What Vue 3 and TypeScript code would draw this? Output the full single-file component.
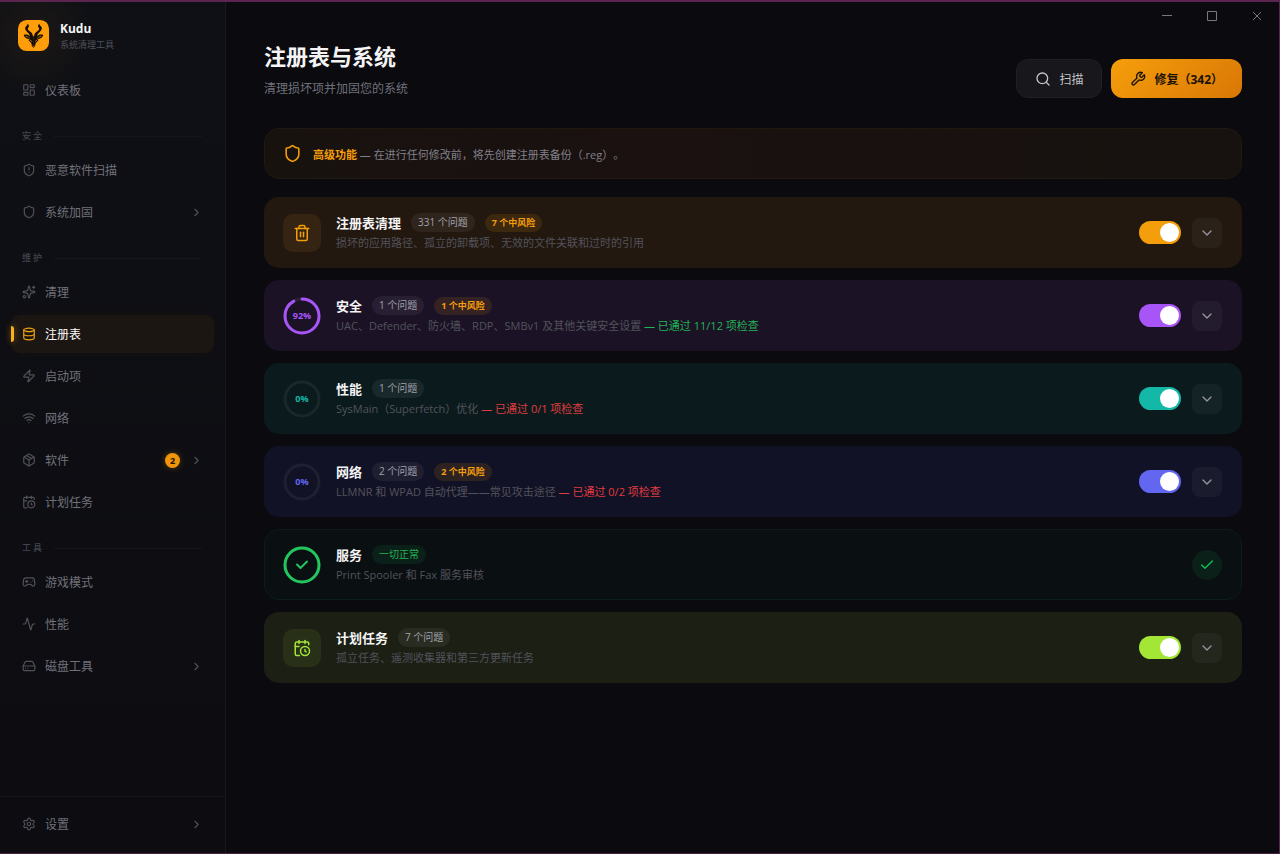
<script setup lang="ts">
import { reactive } from 'vue'

type IconName = keyof typeof icons

interface NavItem {
  label: string
  icon: IconName
  active?: boolean
  expandable?: boolean
  badge?: number
}

interface NavGroup {
  title?: string
  items: NavItem[]
}

interface Category {
  id: string
  title: string
  icon?: IconName
  percent?: number
  issues?: string
  risk?: string
  description: string
  checks?: string
  checksOk?: boolean
  healthy?: boolean
  enabled: boolean
}

const icons = {
  dashboard: [
    'M4 3h5a1 1 0 0 1 1 1v7a1 1 0 0 1-1 1H4a1 1 0 0 1-1-1V4a1 1 0 0 1 1-1z',
    'M15 3h5a1 1 0 0 1 1 1v3a1 1 0 0 1-1 1h-5a1 1 0 0 1-1-1V4a1 1 0 0 1 1-1z',
    'M15 12h5a1 1 0 0 1 1 1v7a1 1 0 0 1-1 1h-5a1 1 0 0 1-1-1v-7a1 1 0 0 1 1-1z',
    'M4 16h5a1 1 0 0 1 1 1v3a1 1 0 0 1-1 1H4a1 1 0 0 1-1-1v-3a1 1 0 0 1 1-1z',
  ],
  shield: [
    'M20 13c0 5-3.5 7.5-7.66 8.95a1 1 0 0 1-.67-.01C7.5 20.5 4 18 4 13V6a1 1 0 0 1 1-1c2 0 4.5-1.2 6.24-2.72a1.17 1.17 0 0 1 1.52 0C14.51 3.81 17 5 19 5a1 1 0 0 1 1 1z',
  ],
  shieldAlert: [
    'M20 13c0 5-3.5 7.5-7.66 8.95a1 1 0 0 1-.67-.01C7.5 20.5 4 18 4 13V6a1 1 0 0 1 1-1c2 0 4.5-1.2 6.24-2.72a1.17 1.17 0 0 1 1.52 0C14.51 3.81 17 5 19 5a1 1 0 0 1 1 1z',
    'M12 8v4',
    'M12 16h.01',
  ],
  sparkles: [
    'M11.017 2.814a1 1 0 0 1 1.966 0l1.051 5.558a2 2 0 0 0 1.594 1.594l5.558 1.051a1 1 0 0 1 0 1.966l-5.558 1.051a2 2 0 0 0-1.594 1.594l-1.051 5.558a1 1 0 0 1-1.966 0l-1.051-5.558a2 2 0 0 0-1.594-1.594l-5.558-1.051a1 1 0 0 1 0-1.966l5.558-1.051a2 2 0 0 0 1.594-1.594z',
    'M20 2v4',
    'M22 4h-4',
    'M6 20a2 2 0 1 1-4 0a2 2 0 1 1 4 0',
  ],
  database: [
    'M21 5a9 3 0 1 1-18 0a9 3 0 1 1 18 0',
    'M3 5v14a9 3 0 0 0 18 0V5',
    'M3 12a9 3 0 0 0 18 0',
  ],
  zap: [
    'M4 14a1 1 0 0 1-.78-1.63l9.9-10.2a.5.5 0 0 1 .86.46l-1.92 6.02A1 1 0 0 0 13 10h7a1 1 0 0 1 .78 1.63l-9.9 10.2a.5.5 0 0 1-.86-.46l1.92-6.02A1 1 0 0 0 11 14z',
  ],
  wifi: ['M12 20h.01', 'M2 8.82a15 15 0 0 1 20 0', 'M5 12.859a10 10 0 0 1 14 0', 'M8.5 16.429a5 5 0 0 1 7 0'],
  package: [
    'M11 21.73a2 2 0 0 0 2 0l7-4A2 2 0 0 0 21 16V8a2 2 0 0 0-1-1.73l-7-4a2 2 0 0 0-2 0l-7 4A2 2 0 0 0 3 8v8a2 2 0 0 0 1 1.73z',
    'M12 22V12',
    'M3.29 7L12 12l8.71-5',
    'M7.5 4.27l9 5.15',
  ],
  calendarClock: [
    'M16 14v2.2l1.6 1',
    'M16 2v4',
    'M21 7.5V6a2 2 0 0 0-2-2H5a2 2 0 0 0-2 2v14a2 2 0 0 0 2 2h3.5',
    'M3 10h5',
    'M8 2v4',
    'M22 16a6 6 0 1 1-12 0a6 6 0 1 1 12 0',
  ],
  gamepad: [
    'M6 11h4',
    'M8 9v4',
    'M15 12h.01',
    'M18 10h.01',
    'M17.32 5H6.68a4 4 0 0 0-3.978 3.59c-.006.052-.01.101-.017.152C2.604 9.416 2 14.456 2 16a3 3 0 0 0 3 3c1 0 1.5-.5 2-1l1.414-1.414A2 2 0 0 1 9.828 16h4.344a2 2 0 0 1 1.414.586L17 18c.5.5 1 1 2 1a3 3 0 0 0 3-3c0-1.545-.604-6.584-.685-7.258-.007-.05-.011-.1-.017-.151A4 4 0 0 0 17.32 5z',
  ],
  activity: [
    'M22 12h-2.48a2 2 0 0 0-1.93 1.46l-2.35 8.36a.25.25 0 0 1-.48 0L9.24 2.18a.25.25 0 0 0-.48 0l-2.35 8.36A2 2 0 0 1 4.49 12H2',
  ],
  hardDrive: [
    'M22 12H2',
    'M5.45 5.11L2 12v6a2 2 0 0 0 2 2h16a2 2 0 0 0 2-2v-6l-3.45-6.89A2 2 0 0 0 16.76 4H7.24a2 2 0 0 0-1.79 1.11z',
    'M6 16h.01',
    'M10 16h.01',
  ],
  settings: [
    'M9.671 4.136a2.34 2.34 0 0 1 4.659 0 2.34 2.34 0 0 0 3.319 1.915 2.34 2.34 0 0 1 2.33 4.033 2.34 2.34 0 0 0 0 3.831 2.34 2.34 0 0 1-2.33 4.033 2.34 2.34 0 0 0-3.319 1.915 2.34 2.34 0 0 1-4.659 0 2.34 2.34 0 0 0-3.32-1.915 2.34 2.34 0 0 1-2.33-4.033 2.34 2.34 0 0 0 0-3.831A2.34 2.34 0 0 1 6.35 6.051a2.34 2.34 0 0 0 3.319-1.915',
    'M15 12a3 3 0 1 1-6 0a3 3 0 1 1 6 0',
  ],
  search: ['M19 11a8 8 0 1 1-16 0a8 8 0 1 1 16 0', 'M21 21l-4.34-4.34'],
  wrench: [
    'M14.7 6.3a1 1 0 0 0 0 1.4l1.6 1.6a1 1 0 0 0 1.4 0l3.77-3.77a6 6 0 0 1-7.94 7.94l-6.91 6.91a2.12 2.12 0 0 1-3-3l6.91-6.91a6 6 0 0 1 7.94-7.94l-3.76 3.76z',
  ],
  trash: ['M3 6h18', 'M19 6v14a2 2 0 0 1-2 2H7a2 2 0 0 1-2-2V6', 'M8 6V4a2 2 0 0 1 2-2h4a2 2 0 0 1 2 2v2', 'M10 11v6', 'M14 11v6'],
  check: ['M20 6L9 17l-5-5'],
  chevronRight: ['M9 18l6-6-6-6'],
  chevronDown: ['M6 9l6 6 6-6'],
}

const groups: NavGroup[] = [
  { items: [{ label: '仪表板', icon: 'dashboard' }] },
  {
    title: '安全',
    items: [
      { label: '恶意软件扫描', icon: 'shieldAlert' },
      { label: '系统加固', icon: 'shield', expandable: true },
    ],
  },
  {
    title: '维护',
    items: [
      { label: '清理', icon: 'sparkles' },
      { label: '注册表', icon: 'database', active: true },
      { label: '启动项', icon: 'zap' },
      { label: '网络', icon: 'wifi' },
      { label: '软件', icon: 'package', expandable: true, badge: 2 },
      { label: '计划任务', icon: 'calendarClock' },
    ],
  },
  {
    title: '工具',
    items: [
      { label: '游戏模式', icon: 'gamepad' },
      { label: '性能', icon: 'activity' },
      { label: '磁盘工具', icon: 'hardDrive', expandable: true },
    ],
  },
]

const categories = reactive<Category[]>([
  {
    id: 'registry',
    title: '注册表清理',
    icon: 'trash',
    issues: '331 个问题',
    risk: '7 个中风险',
    description: '损坏的应用路径、孤立的卸载项、无效的文件关联和过时的引用',
    enabled: true,
  },
  {
    id: 'security',
    title: '安全',
    percent: 92,
    issues: '1 个问题',
    risk: '1 个中风险',
    description: 'UAC、Defender、防火墙、RDP、SMBv1 及其他关键安全设置',
    checks: '— 已通过 11/12 项检查',
    checksOk: true,
    enabled: true,
  },
  {
    id: 'performance',
    title: '性能',
    percent: 0,
    issues: '1 个问题',
    description: 'SysMain（Superfetch）优化',
    checks: '— 已通过 0/1 项检查',
    enabled: true,
  },
  {
    id: 'network',
    title: '网络',
    percent: 0,
    issues: '2 个问题',
    risk: '2 个中风险',
    description: 'LLMNR 和 WPAD 自动代理——常见攻击途径',
    checks: '— 已通过 0/2 项检查',
    enabled: true,
  },
  {
    id: 'services',
    title: '服务',
    percent: 100,
    description: 'Print Spooler 和 Fax 服务审核',
    healthy: true,
    enabled: true,
  },
  {
    id: 'tasks',
    title: '计划任务',
    icon: 'calendarClock',
    issues: '7 个问题',
    description: '孤立任务、遥测收集器和第三方更新任务',
    enabled: true,
  },
])
</script>

<template>
  <div class="window">
    <aside class="sidebar">
      <div class="brand">
        <svg class="logo" viewBox="0 0 93 93" aria-hidden="true">
          <rect width="93" height="93" rx="26" fill="#ff9d0a" />
          <g id="kudu-half" fill="#120d05">
            <path d="M29 11C34 15 34 20 30 24C28 27 30 30 34 33C40 37 44 41 45 48L36 48C35 42 31 39 27 35C20 29 20 22 25 18C28 15 29 13 29 11z" />
            <path d="M17 45C24 42 32 44 36 49L34 57C26 57 20 53 17 45z" />
            <path d="M34 47L47 49L47 83L42 79L40 70L31 60L35 58z" />
          </g>
          <use href="#kudu-half" transform="matrix(-1 0 0 1 93 0)" />
          <path d="M23 48l9 4M70 48l-9 4M36 60l6 5M57 60l-6 5M44 77l3 2 2-2" fill="none" stroke="#ff9d0a" stroke-width="2" />
        </svg>
        <div class="brand-text">
          <div class="brand-name">Kudu</div>
          <div class="brand-sub">系统清理工具</div>
        </div>
      </div>

      <nav class="nav">
        <section v-for="(group, gi) in groups" :key="gi">
          <h2 v-if="group.title" class="nav-heading"><span>{{ group.title }}</span></h2>
          <ul class="nav-list">
            <li v-for="item in group.items" :key="item.label">
              <a href="#" class="nav-item" :class="{ active: item.active }">
                <svg class="icon nav-icon" viewBox="0 0 24 24"><path v-for="d in icons[item.icon]" :key="d" :d="d" /></svg>
                <span class="nav-label">{{ item.label }}</span>
                <span v-if="item.badge" class="badge">{{ item.badge }}</span>
                <svg v-if="item.expandable" class="icon nav-chevron" viewBox="0 0 24 24"><path :d="icons.chevronRight[0]" /></svg>
              </a>
            </li>
          </ul>
        </section>
      </nav>

      <div class="sidebar-footer">
        <a href="#" class="nav-item">
          <svg class="icon nav-icon" viewBox="0 0 24 24"><path v-for="d in icons.settings" :key="d" :d="d" /></svg>
          <span class="nav-label">设置</span>
          <svg class="icon nav-chevron" viewBox="0 0 24 24"><path :d="icons.chevronRight[0]" /></svg>
        </a>
      </div>
    </aside>

    <div class="main">
      <div class="titlebar">
        <button type="button" aria-label="最小化"><svg viewBox="0 0 10 10"><path d="M0 4.500h10" /></svg></button>
        <button type="button" aria-label="最大化"><svg viewBox="0 0 10 10"><path d="M.5.5h9v9h-9z" /></svg></button>
        <button type="button" aria-label="关闭"><svg viewBox="0 0 10 10"><path d="M1 1l8 8M9 1l-8 8" /></svg></button>
      </div>

      <main class="content">
        <header class="page-header">
          <div>
            <h1>注册表与系统</h1>
            <p class="subtitle">清理损坏项并加固您的系统</p>
          </div>
          <div class="actions">
            <button type="button" class="btn btn-scan">
              <svg class="icon" viewBox="0 0 24 24"><path v-for="d in icons.search" :key="d" :d="d" /></svg>
              扫描
            </button>
            <button type="button" class="btn btn-fix">
              <svg class="icon" viewBox="0 0 24 24"><path v-for="d in icons.wrench" :key="d" :d="d" /></svg>
              修复（342）
            </button>
          </div>
        </header>

        <div class="notice">
          <svg class="icon" viewBox="0 0 24 24"><path :d="icons.shield[0]" /></svg>
          <p><strong>高级功能</strong> — 在进行任何修改前，将先创建注册表备份（.reg）。</p>
        </div>

        <section v-for="cat in categories" :key="cat.id" class="card" :class="cat.id">
          <div v-if="cat.icon" class="tile">
            <svg class="icon" viewBox="0 0 24 24"><path v-for="d in icons[cat.icon]" :key="d" :d="d" /></svg>
          </div>
          <div v-else class="ring">
            <svg viewBox="0 0 38 38" aria-hidden="true">
              <circle class="track" cx="19" cy="19" r="17" />
              <circle
                v-if="cat.percent"
                class="progress"
                cx="19"
                cy="19"
                r="17"
                pathLength="100"
                :stroke-dasharray="`${cat.percent} 100`"
              />
              <path v-if="cat.healthy" class="ring-check" d="M24 15.500l-6.500 6.500-3.500-3.500" />
            </svg>
            <span v-if="!cat.healthy" class="ring-value">{{ cat.percent }}%</span>
          </div>

          <div class="body">
            <div class="heading">
              <h3 :id="`title-${cat.id}`">{{ cat.title }}</h3>
              <span v-if="cat.issues" class="pill">{{ cat.issues }}</span>
              <span v-if="cat.healthy" class="pill pill-ok">一切正常</span>
              <span v-if="cat.risk" class="pill pill-risk">{{ cat.risk }}</span>
            </div>
            <p class="desc">
              {{ cat.description }}
              <span v-if="cat.checks" :class="cat.checksOk ? 'pass' : 'fail'">{{ cat.checks }}</span>
            </p>
          </div>

          <div v-if="cat.healthy" class="ok-mark">
            <svg class="icon" viewBox="0 0 24 24"><path :d="icons.check[0]" /></svg>
          </div>
          <template v-else>
            <input v-model="cat.enabled" class="switch" type="checkbox" role="switch" :aria-labelledby="`title-${cat.id}`" />
            <button type="button" class="expand" aria-label="展开">
              <svg class="icon" viewBox="0 0 24 24"><path :d="icons.chevronDown[0]" /></svg>
            </button>
          </template>
        </section>
      </main>
    </div>
  </div>
</template>

<style>
body {
  margin: 0;
  background: #0a0a0f;
}
</style>

<style scoped>
* {
  box-sizing: border-box;
}

.window {
  display: flex;
  min-height: 100vh;
  border-top: 2px solid #5a264f;
  border-right: 1px solid #5a264f;
  border-bottom: 1px solid #42233c;
  background: #0a0a0f;
  color: #f4f4f5;
  font-family: 'Open Sans', 'Noto Sans CJK SC', sans-serif;
  font-size: 12px;
  text-spacing-trim: space-all;
}

h1,
h2,
h3,
p,
ul {
  margin: 0;
  padding: 0;
}

button {
  font: inherit;
  cursor: pointer;
}

.icon {
  flex: none;
  fill: none;
  stroke: currentColor;
  stroke-width: 2;
  stroke-linecap: round;
  stroke-linejoin: round;
}

.sidebar {
  display: flex;
  flex: none;
  flex-direction: column;
  width: 226px;
  border-right: 1px solid #18181f;
  background:
    radial-gradient(circle at 33px 33px, rgba(245, 158, 11, 0.06), transparent 60px),
    linear-gradient(#0f1015, #0c0c11);
}

.brand {
  display: flex;
  align-items: center;
  gap: 11px;
  padding: 17px 18px 19px;
}

.logo {
  width: 31px;
  height: 31px;
}

.brand-text {
  padding-top: 2px;
}

.brand-name {
  font-size: 12px;
  font-weight: 700;
  line-height: 16px;
}

.brand-sub {
  color: #50505a;
  font-size: 9px;
  line-height: 15px;
}

.nav {
  flex: 1;
  padding: 0 11px;
}

.nav-heading {
  display: flex;
  align-items: center;
  gap: 10px;
  padding: 21px 12px 9px 11px;
  color: #44444d;
  font-size: 9px;
  font-weight: 500;
  letter-spacing: 2px;
  line-height: 12px;
}

.nav-heading::after {
  flex: 1;
  height: 1px;
  background: #16171c;
  content: '';
}

.nav-list {
  display: flex;
  flex-direction: column;
  gap: 4px;
  list-style: none;
}

.nav-item {
  position: relative;
  display: flex;
  align-items: center;
  height: 38px;
  padding: 0 11px;
  border-radius: 9px;
  color: #71717a;
  text-decoration: none;
}

.nav-icon {
  width: 14px;
  height: 14px;
  margin-right: 9px;
  color: #51515a;
}

.nav-label {
  flex: 1;
}

.nav-chevron {
  width: 13px;
  height: 13px;
  color: #51515a;
}

.nav-item.active {
  background: #1c1613;
  box-shadow: 0 0 12px rgba(245, 158, 11, 0.04);
  color: #fafafa;
}

.nav-item.active .nav-icon {
  color: #eaa20c;
}

.nav-item.active::before {
  position: absolute;
  top: 11px;
  left: 0;
  width: 3px;
  height: 16px;
  border-radius: 0 3px 3px 0;
  background: #fbb01a;
  box-shadow: 0 0 6px rgba(245, 158, 11, 0.5);
  content: '';
}

.badge {
  width: 15px;
  height: 15px;
  margin-right: 10px;
  border-radius: 50%;
  background: #f0940a;
  box-shadow: 0 0 6px rgba(245, 158, 11, 0.3);
  color: #1a1004;
  font-size: 9px;
  font-weight: 700;
  line-height: 15px;
  text-align: center;
}

.sidebar-footer {
  padding: 8px 11px 10px;
  border-top: 1px solid #15151b;
}

.main {
  display: flex;
  flex: 1;
  flex-direction: column;
  min-width: 0;
}

.titlebar {
  display: flex;
  justify-content: flex-end;
  height: 28px;
}

.titlebar button {
  display: flex;
  align-items: center;
  justify-content: center;
  width: 45px;
  padding: 0;
  border: 0;
  background: none;
}

.titlebar svg {
  width: 10px;
  height: 10px;
  fill: none;
  stroke: #77777f;
}

.content {
  display: flex;
  flex-direction: column;
  gap: 12px;
  padding: 11px 37px 38px 38px;
}

.page-header {
  display: flex;
  align-items: flex-end;
  justify-content: space-between;
  margin-bottom: 18px;
}

h1 {
  font-size: 22px;
  font-weight: 700;
  line-height: 30px;
}

.subtitle {
  padding-top: 9px;
  color: #71717a;
  line-height: 18px;
}

.actions {
  display: flex;
  gap: 9px;
}

.btn {
  display: flex;
  align-items: center;
  gap: 8px;
  height: 39px;
  padding: 0 18px;
  border: 1px solid #1f1f25;
  border-radius: 12px;
  background: #17171c;
  color: #c4c4ca;
  white-space: nowrap;
}

.btn .icon {
  width: 16px;
  height: 16px;
}

.btn-fix {
  padding: 0 19px;
  border: 0;
  background: linear-gradient(135deg, #f59e0b, #d97706);
  color: #1a1206;
  font-weight: 700;
}

.notice {
  display: flex;
  align-items: center;
  gap: 11px;
  height: 51px;
  margin-bottom: 6px;
  padding: 0 18px;
  border: 1px solid #21180f;
  border-radius: 15px;
  background: linear-gradient(90deg, #18120f, #1a1110 40%, #17120f);
  color: #80808a;
  font-size: 11px;
}

.notice .icon {
  width: 19px;
  height: 19px;
  color: #f59e0b;
}

.notice strong {
  color: #f59e0b;
  font-weight: 700;
}

.card {
  display: flex;
  align-items: center;
  height: 71px;
  padding: 0 20px 0 19px;
  border-radius: 15px;
}

.registry {
  --accent: #f59e0b;
  --tile: #352411;
  background: #22180f;
}

.security {
  --accent: #a855f7;
  background: #1b1226;
}

.performance {
  --accent: #14b8a6;
  background: #0b1b1d;
}

.network {
  --accent: #6366f1;
  background: #121226;
}

.services {
  --accent: #22c55e;
  border: 1px solid #0c1d19;
  background: #0a0f12;
}

.services.card {
  padding: 0 19px 0 18px;
}

.tasks {
  --accent: #a3e635;
  --tile: #283017;
  background: #1b1f14;
}

.tile {
  display: flex;
  flex: none;
  align-items: center;
  justify-content: center;
  width: 38px;
  height: 38px;
  border-radius: 10px;
  background: var(--tile);
  color: var(--accent);
}

.tile .icon {
  width: 18px;
  height: 18px;
}

.ring {
  position: relative;
  flex: none;
  width: 38px;
  height: 38px;
}

.ring svg {
  display: block;
  fill: none;
  stroke-linecap: round;
  stroke-linejoin: round;
}

.ring circle {
  stroke-width: 3;
  transform: rotate(-90deg);
  transform-origin: center;
}

.track {
  stroke: rgba(255, 255, 255, 0.06);
}

.progress,
.ring-check {
  stroke: var(--accent);
}

.ring-check {
  stroke-width: 2;
}

.ring-value {
  position: absolute;
  inset: 0;
  color: var(--accent);
  font-size: 9px;
  font-weight: 700;
  line-height: 38px;
  text-align: center;
}

.body {
  flex: 1;
  min-width: 0;
  padding-left: 15px;
}

.heading {
  display: flex;
  align-items: center;
  gap: 10px;
  height: 20px;
}

h3 {
  font-size: 13px;
  font-weight: 700;
  line-height: 20px;
}

.pill {
  padding: 0 7px;
  border-radius: 10px;
  background: rgba(255, 255, 255, 0.06);
  color: #a1a1aa;
  font-size: 10px;
  line-height: 19px;
}

.pill-risk {
  background: rgba(245, 158, 11, 0.12);
  color: #f59e0b;
  font-size: 9px;
  font-weight: 700;
  line-height: 18px;
}

.pill-ok {
  background: #0b2019;
  color: #22b455;
}

.desc {
  color: #52525b;
  font-size: 11px;
  line-height: 20px;
}

.pass {
  color: #22b455;
}

.fail {
  color: #e03c3f;
}

.switch {
  flex: none;
  width: 42px;
  height: 23px;
  margin: 0 11px 0 0;
  padding: 2px;
  border-radius: 12px;
  background: #2a2a31;
  appearance: none;
  cursor: pointer;
}

.switch::before {
  display: block;
  width: 19px;
  height: 19px;
  border-radius: 50%;
  background: #fff;
  content: '';
}

.switch:checked {
  background: var(--accent);
}

.switch:checked::before {
  margin-left: auto;
}

.expand,
.ok-mark {
  display: flex;
  flex: none;
  align-items: center;
  justify-content: center;
  width: 30px;
  height: 30px;
  padding: 0;
  border: 0;
  border-radius: 8px;
  background: rgba(255, 255, 255, 0.04);
  color: #96969e;
}

.ok-mark {
  border-radius: 50%;
  background: #0b2019;
  color: #0fc452;
}

.expand .icon,
.ok-mark .icon {
  width: 16px;
  height: 16px;
}
</style>
